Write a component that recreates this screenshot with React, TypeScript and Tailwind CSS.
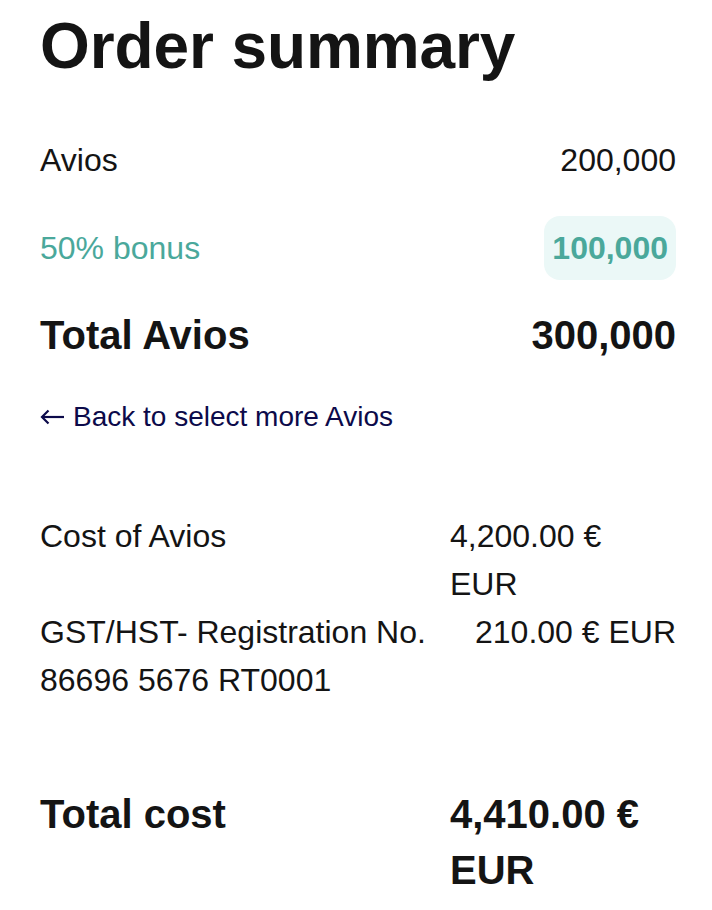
const text = "text-[#141414]";

function CostRow({ label, value, bold = false }: { label: string; value: string; bold?: boolean }) {
  return (
    <div
      className={
        "flex justify-between gap-6 " +
        (bold ? "text-[40px] leading-[56px] font-bold" : "text-[32px] leading-[48px]")
      }
    >
      <span className="flex-1">{label}</span>
      <span className="max-w-[226px]">{value}</span>
    </div>
  );
}

export default function App() {
  return (
    <div
      className={"min-h-[910px] bg-white pl-10 pr-9 pt-2 " + text}
      style={{ fontFamily: '"Liberation Sans", Arial, sans-serif' }}
    >
      <h1 className="text-[64px] leading-[77px] font-bold tracking-[-0.1px]">Order summary</h1>

      <div className="mt-[51px] flex justify-between text-[32px] leading-[48px]">
        <span>Avios</span>
        <span>200,000</span>
      </div>

      <div className="mt-8 flex items-center justify-between text-[32px] leading-[48px] text-[#4aa89b]">
        <span>50% bonus</span>
        <span className="rounded-2xl bg-[#ebf8f7] px-2 py-2 font-bold">100,000</span>
      </div>

      <div className="mt-[27px] flex justify-between text-[40px] leading-[56px] font-bold">
        <span>Total Avios</span>
        <span>300,000</span>
      </div>

      <a href="#" className="mt-[33px] flex items-center gap-[9px] text-[28px] leading-[42px] text-[#0c0a4a]">
        <svg width="24" height="16" viewBox="0 0 24 16" fill="none" stroke="currentColor" strokeWidth="2.2" aria-hidden>
          <path d="M24 8H2" />
          <path d="M8.5 1.5L2 8l6.5 6.5" />
        </svg>
        <span>Back to select more Avios</span>
      </a>

      <div className="mt-[74px]">
        <CostRow label="Cost of Avios" value="4,200.00 € EUR" />
        <CostRow label="GST/HST- Registration No. 86696 5676 RT0001" value="210.00 € EUR" />
      </div>

      <div className="mt-[82px]">
        <CostRow label="Total cost" value="4,410.00 € EUR" bold />
      </div>
    </div>
  );
}
